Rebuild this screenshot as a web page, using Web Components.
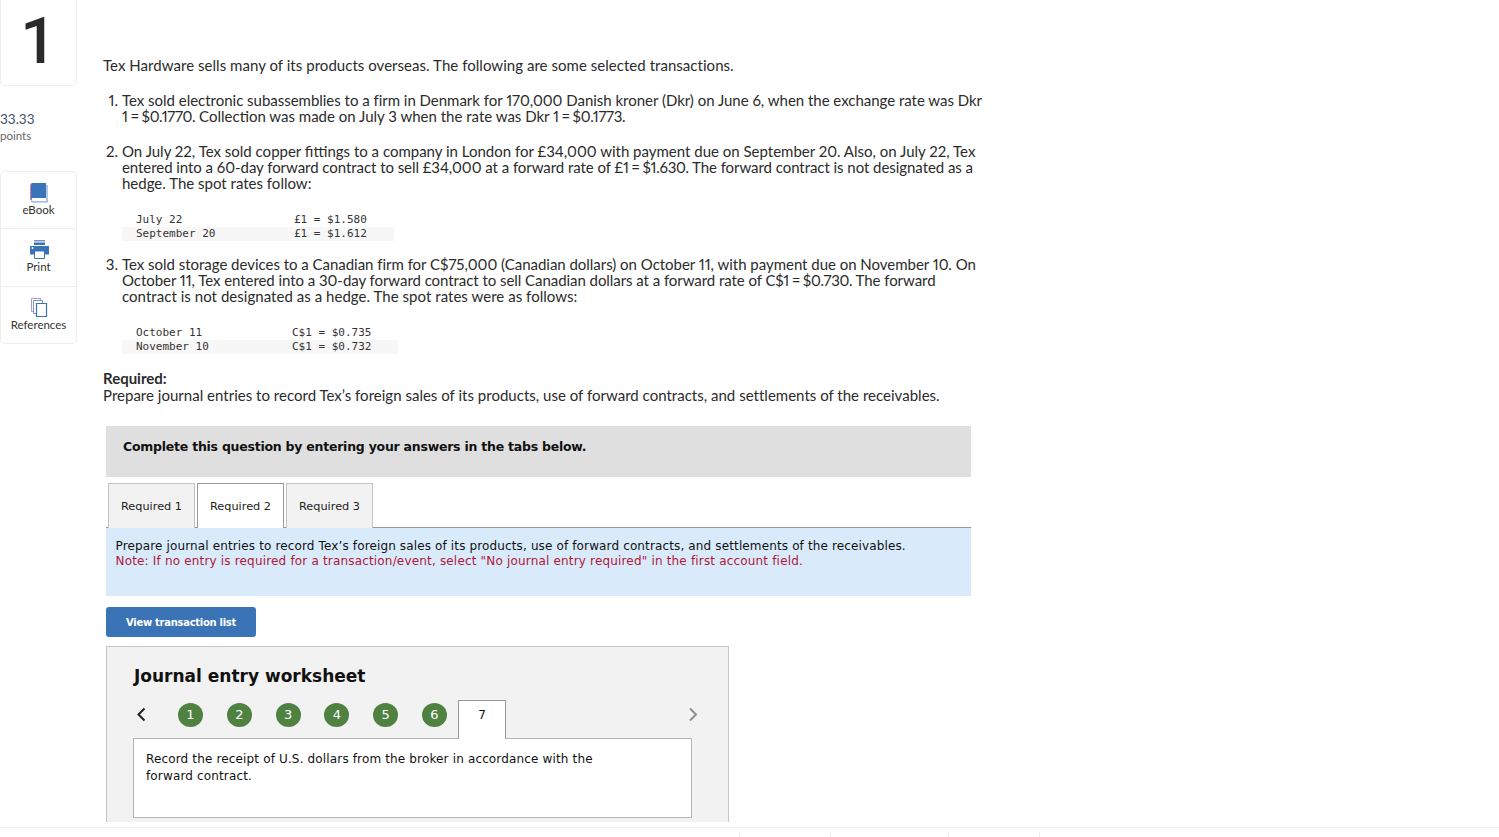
<!DOCTYPE html>
<html>
<head>
<meta charset="utf-8">
<title>Question 1</title>
<style>
  html, body { margin: 0; height: 837px; overflow: hidden; background: #fff; }
  body { font-family: Lato, "Open Sans", sans-serif; color: #2b2b2b; }
</style>
</head>
<body>
<question-page></question-page>
<script>
class QuestionSidebar extends HTMLElement {
  constructor() {
    super();
    this.attachShadow({ mode: "open" });
  }
  connectedCallback() {
    this.shadowRoot.innerHTML = `
      <style>
        :host { display: block; width: 77px; flex: none; font-family: Lato, sans-serif; }
        .num { box-sizing: border-box; height: 86px; border: 1px solid #eee; border-top: 0; border-radius: 0 0 5px 5px;
               display: flex; justify-content: center; align-items: center; font: 500 64px/64px Roboto, sans-serif; color: #2a2a2a; padding-bottom: 1px; }
        .score { margin-top: 25px; font-size: 13.500px; line-height: 16px; color: #3f5268; }
        .pts { font-size: 11.500px; line-height: 14px; color: #666; margin-top: 2px; }
        .tools { box-sizing: border-box; height: 173px; margin-top: 28px; border: 1px solid #eee; border-radius: 5px; display: flex; flex-direction: column; }
        .tools a { flex: 1; display: flex; flex-direction: column; align-items: center; justify-content: flex-start; padding-top: 10px;
                   font-size: 11.500px; line-height: 13px; color: #333; border-bottom: 1px solid #eee; }
        .tools a:last-child { border-bottom: 0; }
        svg { display: block; width: 22px; height: 21px; }
      </style>
      <div class="num">1</div>
      <div class="score">33.33</div>
      <div class="pts">points</div>
      <div class="tools">
        <a><svg viewBox="0 0 22 21"><path d="M3 2.500C3 1.500 3.500 1 4.500 1H18v15H5c-1 0-2 .500-2 1.500z" fill="#3b73b9"/><path d="M3 2.500V18" stroke="#7a5fa8" stroke-width="1.400" fill="none"/><path d="M3.500 18.500c0 1 .700 1.300 1.500 1.300h14V3" fill="none" stroke="#8fa9d0" stroke-width="1.300"/></svg>eBook</a>
        <a><svg viewBox="0 0 22 21"><path d="M6 1h11v1.500H6z" fill="#7d8fc0"/><path d="M6 3.500h11V6H6z" fill="#3b73b9"/><path d="M2 7h19v8.500H2z" fill="#3b73b9"/><path d="M6.500 12h10v7.500h-10z" fill="#fff" stroke="#3b73b9"/><circle cx="4.500" cy="9" r="1" fill="#fff"/></svg>Print</a>
        <a><svg viewBox="0 0 22 21" fill="#fff"><path d="M3.500 1.500h9v13h-9z" stroke="#a79cc9"/><path d="M5.500 3.500h9v13h-9z" stroke="#8a8fc4"/><path d="M8.500 6.500h10v13h-10z" stroke="#3b73b9" stroke-width="1.200"/></svg>References</a>
      </div>`;
  }
}

class RateTable extends HTMLElement {
  constructor() {
    super();
    this.attachShadow({ mode: "open" });
  }
  connectedCallback() {
    const first = this.getAttribute("col") || "158";
    const width = this.getAttribute("width") || "272";
    this.shadowRoot.innerHTML = `
      <style>
        :host { display: block; font-family: "DejaVu Sans Mono", monospace; font-size: 11px; line-height: 14px; color: #333; width: ${width}px; }
        .row { display: grid; grid-template-columns: ${first}px 1fr; padding-left: 14px; white-space: pre; }
        .row.alt { background: #f7f7f7; }
      </style>
      <div class="row"><span>${this.getAttribute("a")}</span><span>${this.getAttribute("ar")}</span></div>
      <div class="row alt"><span>${this.getAttribute("b")}</span><span>${this.getAttribute("br")}</span></div>`;
  }
}

class ProseItem extends HTMLElement {
  constructor() {
    super();
    this.attachShadow({ mode: "open" });
  }
  connectedCallback() {
    this.shadowRoot.innerHTML = `
      <style>
        :host { display: grid; grid-template-columns: 19px 1fr; white-space: nowrap; }
        .n { text-align: right; padding-right: 4px; }
      </style>
      <span class="n">${this.getAttribute("n")}.</span><div><slot></slot></div>`;
  }
}

class TabBar extends HTMLElement {
  constructor() {
    super();
    this.attachShadow({ mode: "open" });
  }
  connectedCallback() {
    this.shadowRoot.innerHTML = `
      <style>
        :host { display: flex; gap: 2px; padding-left: 2px; height: 45px; box-sizing: border-box; border-bottom: 1px solid #999;
                font-family: "DejaVu Sans", Verdana, sans-serif; font-size: 11.300px; color: #222; width: 865px; }
        div { box-sizing: border-box; height: 45px; width: 87px; background: #f2f2f2; border: 1px solid #c4c4c4; border-bottom: 0;
              display: flex; align-items: center; justify-content: center; padding-top: 1px; }
        .on { background: #fff; border-color: #999; position: relative; z-index: 1; }
      </style>
      <div>Required 1</div><div class="on">Required 2</div><div>Required 3</div>`;
  }
}

class JournalWorksheet extends HTMLElement {
  constructor() {
    super();
    this.attachShadow({ mode: "open" });
  }
  connectedCallback() {
    const dots = [1, 2, 3, 4, 5, 6].map(n => `<span class="dot">${n}</span>`).join("");
    this.shadowRoot.innerHTML = `
      <style>
        :host { display: block; box-sizing: border-box; width: 623px; height: 176px; overflow: hidden; background: #f2f2f2; border: 1px solid #c4c4c4; border-bottom: 0;
                padding: 18px 36px 0 26px; font-family: "DejaVu Sans", Verdana, sans-serif; color: #111; }
        h2 { margin: 0 0 0 1px; font-size: 17px; line-height: 22px; font-weight: 700; }
        .nav { display: flex; align-items: flex-start; height: 39px; margin-top: 13px; position: relative; z-index: 1; }
        .prev, .next { width: 16px; height: 30px; flex: none; }
        .prev { margin-right: 29px; }
        .dots { display: flex; gap: 23.800px; padding-top: 3px; font-size: 13px; }
        .dot { width: 25px; height: 24px; flex: none; border-radius: 50%; background: #4f8241; color: #fff; display: flex; align-items: center; justify-content: center; }
        .cur { box-sizing: border-box; width: 48px; height: 39px; margin-left: 11px; background: #fff; border: 1px solid #999; border-bottom: 0;
               font-size: 12px; text-align: center; padding-top: 6px; }
        .next { margin-left: auto; margin-right: -8px; }
        .box { box-sizing: border-box; height: 80px; background: #fff; border: 1px solid #b5b5b5; margin-top: -1px; padding: 12px 12px; font-size: 12px; line-height: 17px; letter-spacing: .150px; white-space: nowrap; }
      </style>
      <h2>Journal entry worksheet</h2>
      <div class="nav">
        <svg class="prev" viewBox="0 0 16 30"><path d="M11.500 8.500 5.500 14.500l6 6" fill="none" stroke="#222" stroke-width="2"/></svg>
        <div class="dots">${dots}</div>
        <div class="cur">7</div>
        <svg class="next" viewBox="0 0 16 30"><path d="M6 8.500l6 6-6 6" fill="none" stroke="#8f8f8f" stroke-width="2"/></svg>
      </div>
      <div class="box">Record the receipt of U.S. dollars from the broker in accordance with the<br>forward contract.</div>`;
  }
}

class PageFooter extends HTMLElement {
  constructor() {
    super();
    this.attachShadow({ mode: "open" });
  }
  connectedCallback() {
    this.shadowRoot.innerHTML = `
      <style>
        :host { display: flex; box-sizing: border-box; height: 10px; border-top: 1px solid #f0f0f0; padding: 4px 0 0 739px; }
        i { display: block; box-sizing: border-box; border-left: 1px solid #eee; height: 6px; }
      </style>
      <i style="width:91px"></i><i style="width:118px"></i><i style="width:91px"></i><i></i>`;
  }
}

class QuestionPage extends HTMLElement {
  constructor() {
    super();
    this.attachShadow({ mode: "open" });
  }
  connectedCallback() {
    this.shadowRoot.innerHTML = `
      <style>
        :host { display: block; height: 837px; overflow: hidden; font-family: Lato, "Open Sans", sans-serif; color: #2b2b2b; }
        .top { display: flex; height: 827px; overflow: hidden; }
        main { margin-left: 26px; padding-top: 57px; font-size: 15px; line-height: 16px; white-space: nowrap; font-variant-numeric: proportional-nums; }
        p { margin: 0; }
        .list { margin-top: 19px; }
        prose-item { margin-bottom: 19px; }
        rate-table { margin: 22px 0 15px 19px; }
        .req { margin-top: 16px; }
        .req b { display: block; margin-bottom: 1px; }
        .eq { word-spacing: -.800px; letter-spacing: -.300px; }
        .wide { letter-spacing: .040px; }
        .tight { letter-spacing: -.055px; }
        .banner { box-sizing: border-box; width: 865px; height: 51px; margin: 23px 0 0 3px; background: #dfdfdf; padding: 12px 17px; font: 700 12.500px/18px "DejaVu Sans", Verdana, sans-serif; letter-spacing: -.240px; color: #111; }
        .tabs { margin: 6px 0 0 3px; }
        .info { box-sizing: border-box; width: 865px; height: 68px; margin-left: 3px; background: #d9ebfa; padding: 11px 9.500px; font: 12px/15px "DejaVu Sans", Verdana, sans-serif; letter-spacing: .135px; color: #111; }
        .note { color: #b0173c; letter-spacing: .175px; }
        button { display: block; width: 150px; height: 30px; margin: 11px 0 9px 3px; padding: 0; border: 0; border-radius: 3px; background: #3a74b7; color: #fff; font: 700 10px "DejaVu Sans", Verdana, sans-serif; letter-spacing: -.280px; }
        journal-worksheet { margin-left: 3px; }
      </style>
      <div class="top">
        <question-sidebar></question-sidebar>
        <main>
          <p class="wide">Tex Hardware sells many of its products overseas. The following are some selected transactions.</p>
          <div class="list">
            <prose-item n="1"><span style="letter-spacing:-.020px">Tex sold electronic subassemblies to a firm in Denmark for 170,000 Danish kroner (Dkr) on June 6, when the exchange rate was Dkr</span><br><span class="eq">1 = $0.1770.</span> Collection was made on July 3 when the rate was Dkr <span class="eq">1 = $0.1773.</span></prose-item>
            <prose-item n="2">On July 22, Tex sold copper fittings to a company in London for £34,000 with payment due on September 20. Also, on July 22, Tex<br><span class="tight">entered into a 60-day forward contract to sell £34,000 at a forward rate of </span><span class="eq">£1 = $1.630.</span><span class="tight"> The forward contract is not designated as a</span><br>hedge. The spot rates follow:</prose-item>
            <rate-table a="July 22" ar="£1 = $1.580" b="September 20" br="£1 = $1.612" col="158" width="272"></rate-table>
            <prose-item n="3"><span style="letter-spacing:-.025px">Tex sold storage devices to a Canadian firm for C$75,000 (Canadian dollars) on October 11, with payment due on November 10. On</span><br><span class="tight">October 11, Tex entered into a 30-day forward contract to sell Canadian dollars at a forward rate of </span><span class="eq">C$1 = $0.730.</span><span class="tight"> The forward</span><br><span class="wide">contract is not designated as a hedge. The spot rates were as follows:</span></prose-item>
            <rate-table a="October 11" ar="C$1 = $0.735" b="November 10" br="C$1 = $0.732" col="156" width="276"></rate-table>
          </div>
          <p class="req"><b>Required:</b><span style="letter-spacing:.015px">Prepare journal entries to record Tex’s foreign sales of its products, use of forward contracts, and settlements of the receivables.</span></p>
          <div class="banner">Complete this question by entering your answers in the tabs below.</div>
          <tab-bar class="tabs"></tab-bar>
          <div class="info">Prepare journal entries to record Tex’s foreign sales of its products, use of forward contracts, and settlements of the receivables.<br><span class="note">Note: If no entry is required for a transaction/event, select "No journal entry required" in the first account field.</span></div>
          <button>View transaction list</button>
          <journal-worksheet></journal-worksheet>
        </main>
      </div>
      <page-footer></page-footer>`;
  }
}

customElements.define("question-sidebar", QuestionSidebar);
customElements.define("rate-table", RateTable);
customElements.define("prose-item", ProseItem);
customElements.define("tab-bar", TabBar);
customElements.define("journal-worksheet", JournalWorksheet);
customElements.define("page-footer", PageFooter);
customElements.define("question-page", QuestionPage);
</script>
</body>
</html>
